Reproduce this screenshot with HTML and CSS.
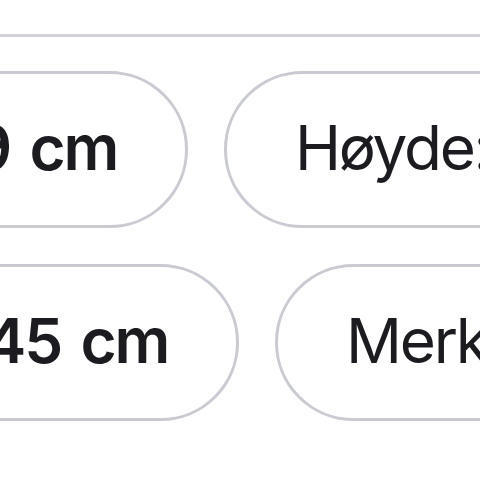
FILE: index.html
```html
<!DOCTYPE html>
<html lang="no">
<head>
    <meta charset="UTF-8">
    <meta name="viewport" content="width=device-width, initial-scale=1.0">
    <title>Produktdetaljer</title>
    <link rel="stylesheet" href="styles.css">
</head>
<body>
    <div class="divider"></div>

    <div id="specs">
        <div class="spec-row">
            <div class="lead">
                <div class="chip">Bredde:&nbsp;<b>59 cm</b></div>
            </div>
            <div class="chip">Høyde:&nbsp;<b>82 cm</b></div>
        </div>

        <div class="spec-row">
            <div class="lead lead-wide">
                <div class="chip">Lengde:&nbsp;<b>145 cm</b></div>
            </div>
            <div class="chip">Merke:&nbsp;<b>Nordisk</b></div>
        </div>
    </div>
</body>
</html>
```

FILE: styles.css
```css
html, body {
    margin: 0;
    padding: 0;
    background-color: #ffffff;
    overflow: hidden;
}

body {
    font-family: Inter, "Noto Sans", sans-serif;
    color: #1c1c20;
    width: 480px;
    height: 480px;
}

.divider {
    height: 3px;
    margin-top: 34px;
    background-color: #d2d2da;
}

#specs {
    margin-top: 34px;
    display: flex;
    flex-direction: column;
    gap: 36px;
}

.spec-row {
    display: flex;
    gap: 36px;
}

/* first chip in each row is cut by the left edge */
.lead {
    flex: none;
    width: 188px;
    display: flex;
    justify-content: flex-end;
}

.lead-wide {
    width: 239px;
}

.chip {
    flex: none;
    box-sizing: border-box;
    height: 157px;
    padding: 0 68px 4px;
    display: flex;
    align-items: center;
    border: 3px solid #cacad2;
    border-radius: 999px;
    font-size: 62px;
    font-weight: 400;
    letter-spacing: -0.036em;
    word-spacing: 0.1em;
    white-space: nowrap;
}

.chip b {
    font-weight: 600;
}
```
